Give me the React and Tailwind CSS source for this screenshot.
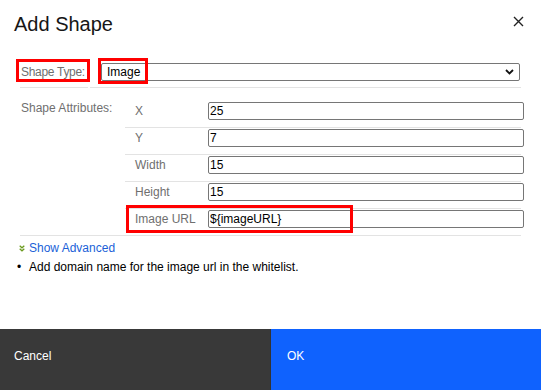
import React from "react";

const attrs = [
  { label: "X", value: "25" },
  { label: "Y", value: "7" },
  { label: "Width", value: "15" },
  { label: "Height", value: "15" },
  { label: "Image URL", value: "${imageURL}", marked: true },
];

const App = () => {
  return (
    <div className="w-[541px] h-[390px] bg-white flex flex-col overflow-hidden font-['Liberation_Sans',Arial,sans-serif] text-[12px]">
      {/* Header */}
      <div className="flex justify-between items-start pl-[14px] pr-[17px] pt-3">
        <h1 className="text-[20px] leading-6 text-[#161616]">Add Shape</h1>
        <button className="mt-[4px]">
          <svg width="11" height="11" viewBox="0 0 11 11">
            <path d="M1 1L10 10M10 1L1 10" stroke="#222" strokeWidth="1.4" />
          </svg>
        </button>
      </div>

      {/* Form table */}
      <div className="mx-5 mt-5">
        {/* Shape Type */}
        <div className="flex gap-[2px]">
          <div className="relative w-[68px] shrink-0 h-[32px] border-b border-[#e3e3e3] flex items-center pl-[1px] whitespace-nowrap tracking-[-0.3px] text-[#6f6f6f]">
            Shape Type:
            <div className="absolute left-[-4px] top-[3px] w-[74px] h-[23px] border-[3px] border-[#ff0000]"></div>
          </div>
          <div className="relative flex-1 h-[32px] border-b border-[#e3e3e3] flex items-center pl-[11px] pr-[1px]">
            <div className="flex-1 h-[18px] border border-[#767676] rounded-[2px] flex items-center justify-between pl-[5px] pr-[5px] text-black">
              <span>Image</span>
              <svg width="9" height="6" viewBox="0 0 9 6">
                <path d="M1 1L4.5 4.5L8 1" stroke="#111" strokeWidth="1.8" fill="none" />
              </svg>
            </div>
            <div className="absolute left-[8px] top-[2px] w-[50px] h-[26px] border-[3px] border-[#ff0000]"></div>
          </div>
        </div>

        {/* Shape Attributes */}
        <div className="flex border-b border-[#e3e3e3]">
          <div className="w-[105px] shrink-0 pt-[13px] pl-[1px] leading-[14px] whitespace-nowrap text-[#6f6f6f]">
            Shape Attributes:
          </div>
          <div className="flex-1 min-w-0 pt-[13px]">
            {attrs.map((a, i) => (
              <div
                key={a.label}
                className={`relative flex items-center pt-[1px] pb-[7px] ${
                  i < attrs.length - 1 ? "border-b border-[#e3e3e3]" : ""
                }`}
              >
                <div className="w-[83px] shrink-0 pl-[10px] leading-[18px] whitespace-nowrap text-[#6f6f6f]">{a.label}</div>
                <input
                  readOnly
                  value={a.value}
                  className="w-[316px] h-[18px] shrink-0 border border-[#767676] rounded-[2px] px-[1px] text-[12px] text-black outline-none"
                />
                {a.marked && (
                  <div className="absolute left-[1px] top-[-4px] w-[227px] h-[28px] border-[3px] border-[#ff0000]"></div>
                )}
              </div>
            ))}
          </div>
        </div>
      </div>

      {/* Advanced + notes */}
      <div className="mt-[5px] pl-[19px] flex items-center gap-[4px] leading-[14px]">
        <svg width="6" height="7" viewBox="0 0 6 7">
          <path d="M0.7 0.8L3 2.8L5.3 0.8M0.7 3.8L3 5.8L5.3 3.8" stroke="#6b9a1e" strokeWidth="1.3" fill="none" />
        </svg>
        <span className="text-[#1b5fd8]">Show Advanced</span>
      </div>
      <ul className="mt-[5px] pl-[17px] leading-[14px] text-black">
        <li className="flex">
          <span className="w-[12px]">•</span>
          Add domain name for the image url in the whitelist.
        </li>
      </ul>

      {/* Footer */}
      <div className="mt-auto h-[61px] flex text-white">
        <button className="w-[271px] h-full bg-[#393939] border-r border-[#333] text-left pl-[14px] pt-[20px] leading-[14px] flex">
          Cancel
        </button>
        <button className="flex-1 h-full bg-[#0f62fe] text-left pl-[16px] pt-[20px] leading-[14px] flex">
          OK
        </button>
      </div>
    </div>
  );
};

export default App;
